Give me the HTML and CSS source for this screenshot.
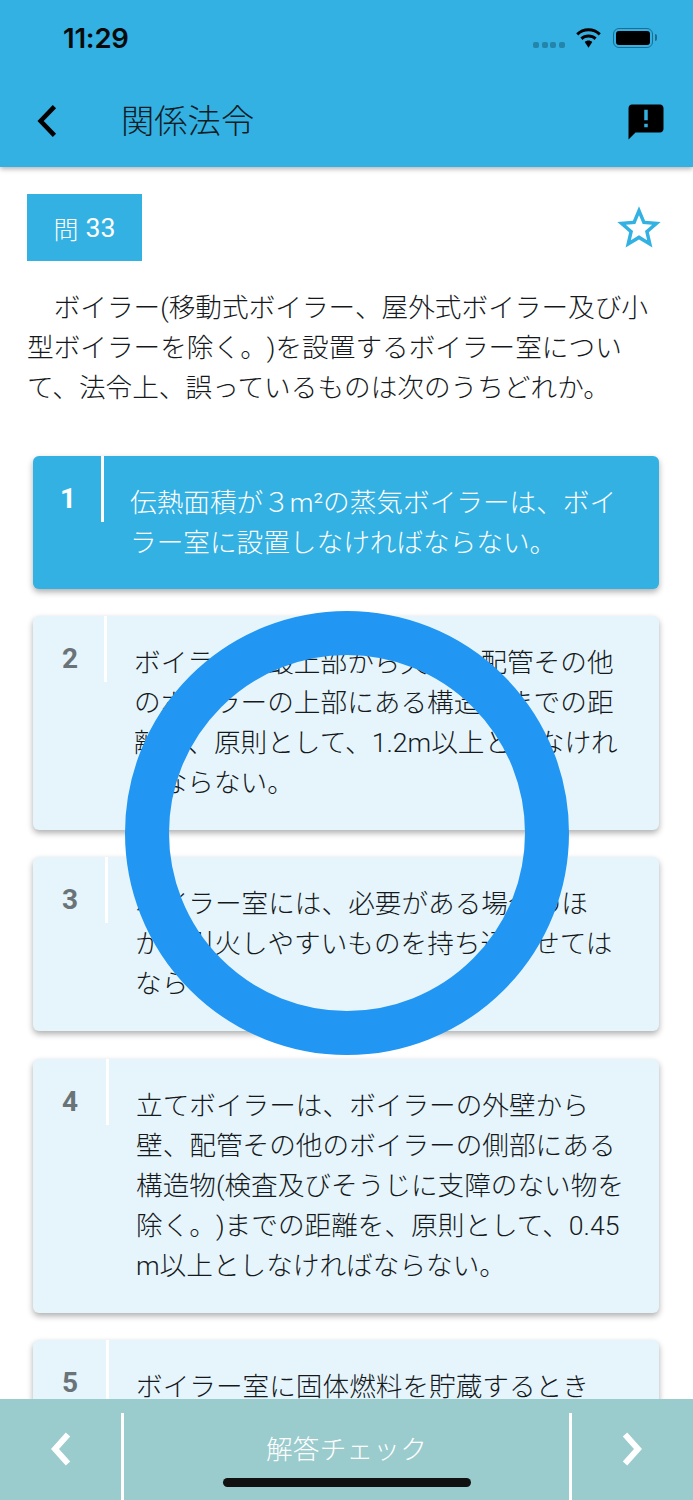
FILE: index.html
```html
<!DOCTYPE html>
<html lang="ja">
<head>
<meta charset="utf-8">
<title>関係法令</title>
<link rel="stylesheet" href="styles.css">
</head>
<body>
<div class="app">
  <header class="header">
    <div class="status">
      <span class="time">11:29</span>
      <div class="status-icons">
        <span class="signal"><i></i><i></i><i></i><i></i></span>
        <svg class="wifi" viewBox="1.700 1 24.600 19.200"><path d="M14 4.200c3.800 0 7.200 1.500 9.800 3.900l2-2.100C22.700 3 18.600 1.200 14 1.200S5.300 3 2.200 6l2 2.100C6.800 5.700 10.200 4.200 14 4.200z"/><path d="M14 10.200c2.200 0 4.200.8 5.700 2.200l2.100-2.200C19.700 8.300 17 7.200 14 7.200s-5.700 1.100-7.800 3l2.100 2.200c1.500-1.400 3.500-2.200 5.700-2.200z"/><path d="M14 13c-1.400 0-2.600.5-3.600 1.400L14 20l3.600-5.600C16.600 13.500 15.400 13 14 13z"/></svg>
        <span class="battery"><span class="battery-fill"></span></span>
      </div>
    </div>
    <div class="toolbar">
      <svg class="back" viewBox="0 0 20 32"><path d="M17 2.500 4 16l13 13.500"/></svg>
      <h1 class="title">関係法令</h1>
      <svg class="report" viewBox="0 0 24 24"><path d="M20 2H4c-1.100 0-1.990.9-1.990 2L2 22l4-4h14c1.100 0 2-.9 2-2V4c0-1.100-.9-2-2-2zm-7 9h-2V5h2v6zm0 4h-2v-2h2v2z"/></svg>
    </div>
  </header>

  <main class="content">
    <div class="question-head">
      <div class="badge"><span class="badge-kanji">問</span> 33</div>
      <svg class="star" viewBox="0 0 24 24"><path d="M22 9.240l-7.190-.62L12 2 9.190 8.630 2 9.240l5.460 4.730L5.820 21 12 17.270 18.180 21l-1.630-7.030L22 9.240zM12 15.400l-3.760 2.270 1-4.280-3.320-2.880 4.380-.38L12 6.100l1.710 4.040 4.380.38-3.320 2.880 1 4.280L12 15.400z"/></svg>
    </div>
    <p class="question">ボイラー(移動式ボイラー、屋外式ボイラー及び小<br>型ボイラーを除く。)を設置するボイラー室につい<br>て、法令上、誤っているものは次のうちどれか。</p>

    <ol class="choices">
      <li class="choice selected">
        <div class="num num-1">1</div>
        <div class="choice-text">伝熱面積が３m²の蒸気ボイラーは、ボイ<br>ラー室に設置しなければならない。</div>
      </li>
      <li class="choice">
        <div class="num num-2">2</div>
        <div class="choice-text">ボイラーの最上部から天井、配管その他<br>のボイラーの上部にある構造物までの距<br>離は、原則として、1.2m以上としなけれ<br>ばならない。</div>
      </li>
      <li class="choice">
        <div class="num num-3">3</div>
        <div class="choice-text">ボイラー室には、必要がある場合のほ<br>か、引火しやすいものを持ち込ませては<br>ならない。</div>
      </li>
      <li class="choice">
        <div class="num num-4">4</div>
        <div class="choice-text">立てボイラーは、ボイラーの外壁から<br>壁、配管その他のボイラーの側部にある<br>構造物(検査及びそうじに支障のない物を<br>除く。)までの距離を、原則として、0.45<br>m以上としなければならない。</div>
      </li>
      <li class="choice choice-clipped">
        <div class="num num-5">5</div>
        <div class="choice-text">ボイラー室に固体燃料を貯蔵するとき</div>
      </li>
    </ol>
  </main>

  <footer class="footer">
    <div class="nav nav-prev"><svg class="nav-icon" viewBox="0 0 20 34"><path d="M17 2.500 4 17l13 14.500"/></svg></div>
    <div class="check">解答チェック</div>
    <div class="nav nav-next"><svg class="nav-icon" viewBox="0 0 20 34"><path d="M3 2.500 16 17 3 31.500"/></svg></div>
    <div class="home-indicator"></div>
  </footer>

  <div class="spinner"></div>
</div>
</body>
</html>
```
FILE: styles.css
```css
* { box-sizing: border-box; }
html, body { margin: 0; padding: 0; }
body {
  width: 693px;
  height: 1500px;
  overflow: hidden;
  background: #fff;
  font-family: Roboto, "Noto Sans CJK JP", sans-serif;
  color: #15191c;
  text-spacing-trim: space-all;
}
.app {
  position: relative;
  width: 693px;
  height: 1500px;
  display: flex;
  flex-direction: column;
  overflow: hidden;
}

/* header */
.header {
  flex: none;
  height: 167px;
  background: #33b1e3;
  box-shadow: 0 2px 5px rgba(0,0,0,.3);
  position: relative;
  z-index: 2;
}
.status {
  height: 76px;
  display: flex;
  align-items: center;
  justify-content: space-between;
  padding: 0 40px 0 63px;
}
.time {
  font-family: Inter, Roboto, sans-serif;
  font-weight: 600;
  font-size: 27.500px;
  letter-spacing: -.2px;
  color: #0a0a0a;
}
.status-icons { display: flex; align-items: center; }
.signal { display: flex; gap: 2.700px; margin: 14px 10px 0 0; }
.signal i {
  display: block;
  width: 6px;
  height: 6px;
  border-radius: 2px;
  background: #2485ab;
}
.wifi { width: 27px; height: 20px; margin-right: 11px; fill: #000; }
.battery {
  position: relative;
  width: 40px;
  height: 20px;
  border: 1.500px solid #1c6d8f;
  border-radius: 6px;
  padding: 2px;
  display: block;
}
.battery::after {
  content: "";
  position: absolute;
  right: -5px;
  top: 5px;
  width: 2.500px;
  height: 7px;
  border-radius: 0 2px 2px 0;
  background: #1c6d8f;
}
.battery-fill {
  display: block;
  height: 100%;
  background: #000;
  border-radius: 3px;
}
.toolbar {
  height: 91px;
  display: flex;
  align-items: flex-start;
  padding: 0 26.500px 0 36px;
}
.back {
  width: 22px;
  height: 34px;
  margin-top: 28px;
  fill: none;
  stroke: #000;
  stroke-width: 4.300;
}
.title {
  margin: 22px 0 0 63px;
  font-size: 33.300px;
  line-height: 48px;
  font-weight: 300;
  color: #0f1c24;
  flex: 1;
}
.report { width: 42px; height: 42px; margin-top: 24.500px; fill: #000; }

/* content */
.content {
  flex: 1;
  min-height: 0;
  overflow: hidden;
  padding-top: 27px;
}
.question-head {
  display: flex;
  align-items: center;
  justify-content: space-between;
  padding: 0 28px 0 27px;
}
.badge {
  width: 115px;
  height: 67px;
  background: #33b1e3;
  color: #fff;
  display: flex;
  align-items: center;
  justify-content: center;
  gap: 7px;
  font-size: 26.600px;
  font-weight: 400;
}
.badge-kanji { font-size: 25px; font-weight: 300; }
.star { width: 52px; height: 52px; fill: #33b1e3; }
.question {
  margin: 27px 0 0 27px;
  font-size: 26.650px;
  line-height: 40px;
  font-weight: 300;
  text-indent: 1em;
  white-space: nowrap;
}
.choices {
  list-style: none;
  margin: 48px 34px 0 33px;
  padding: 0;
  display: flex;
  flex-direction: column;
  gap: 27.200px;
}
.choice {
  display: flex;
  align-items: flex-start;
  background: #e6f5fb;
  border-radius: 6px;
  box-shadow: 0 3px 6px rgba(0,0,0,.32);
}
.choice.selected { background: #33b1e3; color: #fff; }
.choice-clipped { min-height: 160px; }
.num {
  flex: none;
  height: 66px;
  padding: 25px 0 0 29px;
  border-right: 3px solid #fff;
  font-size: 28px;
  line-height: 36px;
  font-weight: 700;
  color: #6a7377;
}
.selected .num { color: #fff; padding-left: 27px; }
.num-1 { width: 71px; }
.num-2 { width: 74px; }
.num-3 { width: 75px; }
.num-4, .num-5 { width: 76px; }
.choice-text {
  padding: 27px 0 27px 27px;
  font-size: 26.650px;
  line-height: 40px;
  font-weight: 300;
  white-space: nowrap;
}
.selected .choice-text { padding: 27px 0 26px 26px; }

/* footer */
.footer {
  position: relative;
  z-index: 3;
  flex: none;
  height: 101px;
  background: #9acbcd;
  display: flex;
  align-items: stretch;
  padding-top: 14px;
  color: #fff;
}
.nav {
  flex: none;
  display: flex;
  align-items: center;
  justify-content: center;
  padding-bottom: 15px;
}
.nav-prev { width: 121px; }
.nav-next { width: 121px; padding-right: 2px; }
.nav-icon {
  width: 20px;
  height: 34px;
  fill: none;
  stroke: #fff;
  stroke-width: 6;
}
.check {
  flex: 1;
  border-left: 3px solid #fff;
  border-right: 3px solid #fff;
  text-align: center;
  font-size: 26.650px;
  line-height: 40px;
  padding-top: 17px;
  font-weight: 300;
  letter-spacing: .2px;
}
.home-indicator {
  position: absolute;
  left: 223px;
  bottom: 13px;
  width: 248px;
  height: 9px;
  border-radius: 5px;
  background: #111;
}

/* loading ring */
.spinner {
  position: absolute;
  left: 125px;
  top: 611px;
  width: 444px;
  height: 444px;
  border: 44px solid #2196f3;
  border-radius: 50%;
  z-index: 4;
}
```
